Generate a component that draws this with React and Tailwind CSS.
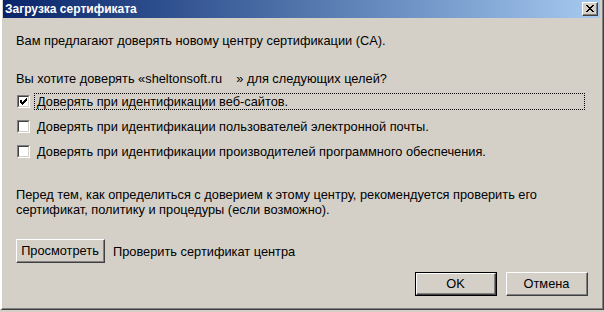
import React from "react";

// Диалог Windows 2000: загрузка сертификата

function Check({ checked }) {
  return (
    <div className="w-[13px] h-[13px] border-t border-l border-t-[#808080] border-l-[#808080] border-b border-r border-b-white border-r-white shrink-0">
      <div className="w-full h-full border-t border-l border-t-[#404040] border-l-[#404040] border-b border-r border-b-[#d4d0c8] border-r-[#d4d0c8] bg-white flex items-center justify-center">
        {checked && (
          <svg width="7" height="7" viewBox="0 0 7 7" shapeRendering="crispEdges">
            <path d="M0 2h1v1H0zM0 3h2v1H0zM0 4h3v1H0zM1 5h2v1H1zM2 6h1v1H2zM3 3h1v3H3zM4 2h1v3H4zM5 1h1v3H5zM6 0h1v3H6zM1 2h1v1H1z" fill="#000" />
          </svg>
        )}
      </div>
    </div>
  );
}

function Btn({ children, def, className = "" }) {
  const inner = (
    <div className="w-full h-full border-t border-l border-t-white border-l-white border-b border-r border-b-[#404040] border-r-[#404040]">
      <div className="w-full h-full border-b border-r border-b-[#808080] border-r-[#808080] flex items-center justify-center">
        {children}
      </div>
    </div>
  );
  if (def) {
    return <div className={`border border-black ${className}`}>{inner}</div>;
  }
  return <div className={className}>{inner}</div>;
}

function Row({ checked, focused, children }) {
  return (
    <div className="flex items-center h-[17px]">
      <div className="ml-[1px]">
        <Check checked={checked} />
      </div>
      <div
        className={`ml-[4px] h-[17px] flex items-center pl-[2px] ${
          focused ? "w-[551px] border border-dotted border-black" : "border border-transparent"
        }`}
      >
        {children}
      </div>
    </div>
  );
}

export default function App() {
  return (
    <div
      className="w-[604px] h-[312px] bg-[#d4d0c8] text-black text-[12.8px] leading-[15px] overflow-hidden"
      style={{ fontFamily: '"Liberation Sans", Arial, sans-serif' }}
    >
      <div className="h-[310px] border-l-[2px] border-l-white border-r border-r-[#404040] border-b border-b-[#404040]">
        <div className="h-full border-r border-r-[#808080] border-b border-b-[#808080] pl-[1px] pr-[2px]">
          {/* Title bar */}
          <div className="h-[18px] flex items-center justify-between bg-gradient-to-r from-[#0a246a] to-[#a6caf0] pl-[2px] pr-[2px]">
            <span className="text-white font-bold text-[12px] leading-none">Загрузка сертификата</span>
            <Btn className="w-[16px] h-[14px] bg-[#d4d0c8]">
              <svg width="8" height="7" viewBox="0 0 8 7" shapeRendering="crispEdges">
                <path d="M0 0h2v1H0zM6 0h2v1H6zM1 1h2v1H1zM5 1h2v1H5zM2 2h4v1H2zM3 3h2v1H3zM2 4h4v1H2zM1 5h2v1H1zM5 5h2v1H5zM0 6h2v1H0zM6 6h2v1H6z" fill="#000" />
              </svg>
            </Btn>
          </div>

          <div className="pl-[13px]">
            <p className="mt-[15px]">Вам предлагают доверять новому центру сертификации (CA).</p>
            <p className="mt-[23px] whitespace-pre">Вы хотите доверять «sheltonsoft.ru    » для следующих целей?</p>

            <div className="mt-[7px] flex flex-col gap-[8px]">
              <Row checked focused>Доверять при идентификации веб-сайтов.</Row>
              <Row>Доверять при идентификации пользователей электронной почты.</Row>
              <Row>Доверять при идентификации производителей программного обеспечения.</Row>
            </div>

            <p className="mt-[27px]">
              Перед тем, как определиться с доверием к этому центру, рекомендуется проверить его
              <br />
              сертификат, политику и процедуры (если возможно).
            </p>

            <div className="mt-[22px] flex items-center">
              <Btn className="w-[89px] h-[24px]">Просмотреть</Btn>
              <span className="ml-[8px]">Проверить сертификат центра</span>
            </div>

            <div className="mt-[9px] flex justify-end gap-[9px] pr-[12px]">
              <Btn def className="w-[82px] h-[24px]">OK</Btn>
              <Btn className="w-[82px] h-[24px]">Отмена</Btn>
            </div>
          </div>
        </div>
      </div>
    </div>
  );
}
